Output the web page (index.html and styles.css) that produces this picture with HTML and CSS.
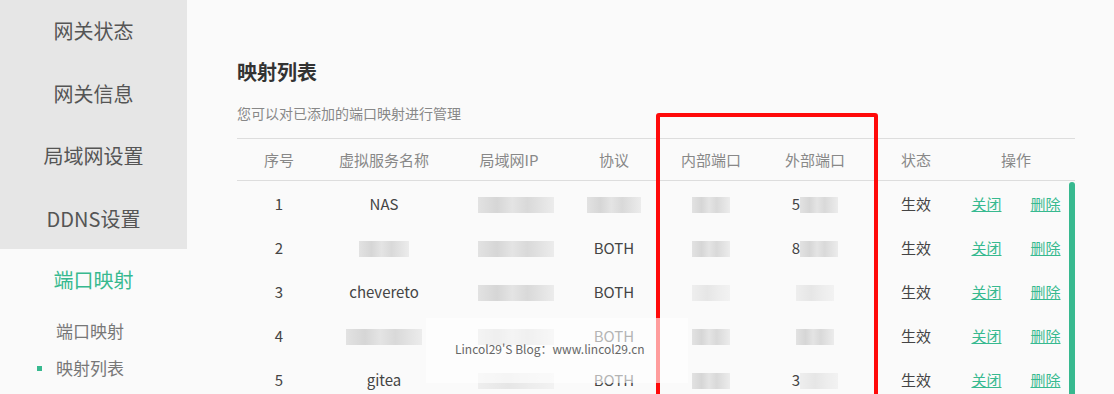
FILE: index.html
```html
<!DOCTYPE html>
<html lang="zh-CN">
<head>
    <meta charset="UTF-8">
    <title>映射列表</title>
    <link rel="stylesheet" href="styles.css">
</head>
<body>
    <!-- Seitenleiste -->
    <div class="sidebar">
        <div class="nav-top">
            <div class="nav-item">网关状态</div>
            <div class="nav-item">网关信息</div>
            <div class="nav-item">局域网设置</div>
            <div class="nav-item">DDNS设置</div>
        </div>
        <div class="nav-item active">端口映射</div>
        <div class="sub-item">端口映射</div>
        <div class="sub-item current">映射列表</div>
    </div>

    <!-- Inhalt -->
    <div class="main">
        <h2 class="title">映射列表</h2>
        <p class="subtitle">您可以对已添加的端口映射进行管理</p>

        <div class="table-wrap">
            <table class="map-table">
                <colgroup>
                    <col style="width:84px"><col style="width:126px"><col style="width:124px"><col style="width:86px">
                    <col style="width:108px"><col style="width:100px"><col style="width:102px"><col style="width:108px">
                </colgroup>
                <thead>
                    <tr>
                        <th>序号</th><th>虚拟服务名称</th><th>局域网IP</th><th>协议</th>
                        <th>内部端口</th><th>外部端口</th><th>状态</th><th class="op">操作</th>
                    </tr>
                </thead>
                <tbody>
                    <tr>
                        <td>1</td><td>NAS</td>
                        <td><span class="mask m-ip"></span></td>
                        <td><span class="mask m-proto"></span></td>
                        <td><span class="mask m-port"></span></td>
                        <td>5<span class="mask m-port"></span></td>
                        <td>生效</td>
                        <td class="op"><a href="#">关闭</a><a href="#">删除</a></td>
                    </tr>
                    <tr>
                        <td>2</td><td><span class="mask m-name"></span></td>
                        <td><span class="mask m-ip"></span></td>
                        <td>BOTH</td>
                        <td><span class="mask m-port"></span></td>
                        <td>8<span class="mask m-port"></span></td>
                        <td>生效</td>
                        <td class="op"><a href="#">关闭</a><a href="#">删除</a></td>
                    </tr>
                    <tr>
                        <td>3</td><td>chevereto</td>
                        <td><span class="mask m-ip"></span></td>
                        <td>BOTH</td>
                        <td><span class="mask m-port light"></span></td>
                        <td><span class="mask m-port light"></span></td>
                        <td>生效</td>
                        <td class="op"><a href="#">关闭</a><a href="#">删除</a></td>
                    </tr>
                    <tr>
                        <td>4</td><td><span class="mask m-name-long"></span></td>
                        <td><span class="mask m-ip"></span></td>
                        <td>BOTH</td>
                        <td><span class="mask m-port"></span></td>
                        <td><span class="mask m-port"></span></td>
                        <td>生效</td>
                        <td class="op"><a href="#">关闭</a><a href="#">删除</a></td>
                    </tr>
                    <tr>
                        <td>5</td><td>gitea</td>
                        <td><span class="mask m-ip light"></span></td>
                        <td>BOTH</td>
                        <td><span class="mask m-port"></span></td>
                        <td>3<span class="mask m-port light"></span></td>
                        <td>生效</td>
                        <td class="op"><a href="#">关闭</a><a href="#">删除</a></td>
                    </tr>
                </tbody>
            </table>
            <div class="scrollbar"></div>
        </div>
    </div>

    <!-- Markierung und Wasserzeichen -->
    <div class="highlight"></div>
    <div class="watermark">Lincol29'S Blog：www.lincol29.cn</div>
</body>
</html>
```

FILE: styles.css
```css
:root {
    --green: #37b98f;
    --side-bg: #e6e6e6;
    --bg: #fafafa;
    --text: #444444;
    --text-light: #888888;
    --line: #dddddd;
}

body {
    margin: 0;
    height: 394px;
    overflow: hidden;
    display: flex;
    background: var(--bg);
    font-family: "Noto Sans CJK SC", "Noto Sans", sans-serif;
    color: var(--text);
}

/* Seitenleiste */
.sidebar {
    width: 187px;
    flex-shrink: 0;
}

.nav-top {
    background: var(--side-bg);
    height: 249px;
}

.nav-item {
    height: 62.5px;
    line-height: 62px;
    text-align: center;
    font-size: 20px;
    color: #555555;
}

.nav-item.active {
    color: var(--green);
}

.sub-item {
    position: relative;
    padding-left: 56px;
    font-size: 17px;
    line-height: 37px;
    color: #777777;
}

.sub-item.current::before {
    content: "";
    position: absolute;
    left: 37px;
    top: 17px;
    width: 5px;
    height: 5px;
    background: var(--green);
}

/* Inhalt */
.main {
    padding-left: 50px;
    width: 838px;
}

.title {
    margin: 57px 0 0;
    font-size: 20px;
    line-height: 30px;
    font-weight: 700;
    color: #333333;
}

.subtitle {
    margin: 15px 0 0;
    font-size: 14px;
    line-height: 22px;
    color: var(--text-light);
}

.table-wrap {
    position: relative;
    margin-top: 14px;
}

.map-table {
    width: 838px;
    border-collapse: collapse;
    table-layout: fixed;
    text-align: center;
}

.map-table th {
    height: 41px;
    padding: 0;
    font-size: 15px;
    font-weight: 400;
    color: var(--text-light);
    border-top: 1px solid var(--line);
    border-bottom: 1px solid var(--line);
}

.map-table td {
    height: 44px;
    font-size: 15px;
    color: var(--text);
    padding: 0;
}

.map-table .op {
    padding-right: 10px;
    white-space: nowrap;
}

.map-table td.op a {
    color: var(--green);
    text-decoration: underline;
}

.map-table td.op a + a {
    margin-left: 29px;
}

/* verpixelte Stellen */
.mask {
    display: inline-block;
    height: 16px;
    vertical-align: middle;
    background: linear-gradient(90deg, #e2e2e2 0%, #d6d6d6 25%, #e4e4e4 45%, #d9d9d9 65%, #ececec 100%);
    filter: blur(0.6px);
}

.mask.light {
    background: linear-gradient(90deg, #eeeeee 0%, #e6e6e6 40%, #ededed 70%, #f2f2f2 100%);
}

.m-ip { width: 76px; margin-left: 14px; }
.m-proto { width: 54px; }
.m-port { width: 38px; }
.m-name { width: 50px; }
.m-name-long { width: 76px; }

.scrollbar {
    position: absolute;
    right: 0;
    top: 44px;
    width: 6px;
    height: 230px;
    border-radius: 3px 3px 0 0;
    background: var(--green);
}

/* Rahmen um die Portspalten */
.highlight {
    position: absolute;
    left: 656px;
    top: 113px;
    width: 214px;
    height: 300px;
    border: 4px solid #ff0a0a;
    border-radius: 3px;
}

.watermark {
    position: absolute;
    left: 426px;
    top: 318px;
    width: 233px;
    height: 65px;
    padding-left: 29px;
    box-sizing: content-box;
    line-height: 61px;
    font-size: 12px;
    color: #666666;
    background: rgba(255, 255, 255, 0.6);
}
```
